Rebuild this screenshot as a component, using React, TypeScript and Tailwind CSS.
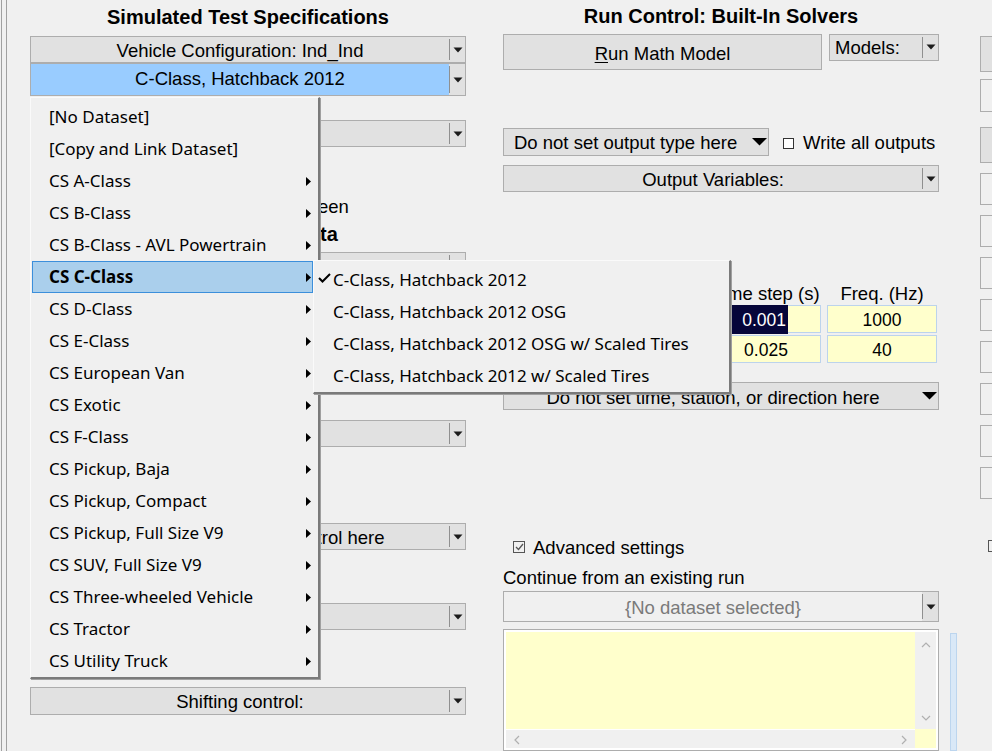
import React from 'react';

const menuItems = [
  '[No Dataset]',
  '[Copy and Link Dataset]',
  'CS A-Class',
  'CS B-Class',
  'CS B-Class - AVL Powertrain',
  'CS C-Class',
  'CS D-Class',
  'CS E-Class',
  'CS European Van',
  'CS Exotic',
  'CS F-Class',
  'CS Pickup, Baja',
  'CS Pickup, Compact',
  'CS Pickup, Full Size V9',
  'CS SUV, Full Size V9',
  'CS Three-wheeled Vehicle',
  'CS Tractor',
  'CS Utility Truck',
];

const subItems = [
  'C-Class, Hatchback 2012',
  'C-Class, Hatchback 2012 OSG',
  'C-Class, Hatchback 2012 OSG w/ Scaled Tires',
  'C-Class, Hatchback 2012 w/ Scaled Tires',
];

const SmallArrow = () => (
  <svg width="10" height="6" viewBox="0 0 10 6">
    <polygon points="0.5,0.5 9.5,0.5 5,5.5" fill="#1c1c1c" />
  </svg>
);

const BigArrow = () => (
  <svg width="15" height="8" viewBox="0 0 15 8">
    <polygon points="0,0 15,0 7.5,7.5" fill="#000" />
  </svg>
);

const SubArrow = () => (
  <svg width="5" height="9" viewBox="0 0 5 9">
    <polygon points="0,0 5,4.5 0,9" fill="#000" />
  </svg>
);

type ComboProps = {
  label?: React.ReactNode;
  className?: string;
  fill?: string;
  left?: boolean;
  muted?: boolean;
  textPad?: string;
};

// combo box with a small arrow cell on the right
function Combo({
  label,
  className = 'h-[27px]',
  fill = 'bg-[#e1e1e1]',
  left,
  muted,
  textPad = 'pt-[2px]',
}: ComboProps) {
  return (
    <div className={`flex border border-[#adadad] bg-[#e1e1e1] ${className}`}>
      <div
        className={`flex flex-1 items-center overflow-hidden whitespace-nowrap ${fill} ${textPad} ${
          left ? 'pl-[5px]' : 'justify-center'
        } ${muted ? 'text-[#7a7a7a]' : ''}`}
      >
        {label}
      </div>
      <div className="my-[2px] flex w-[16px] items-center justify-center border-l border-[#8f8f8f]">
        <SmallArrow />
      </div>
    </div>
  );
}

const Field = ({ children }: { children?: React.ReactNode }) => (
  <div className="flex h-[28px] w-[110px] items-center justify-center border border-[#bcd3ec] bg-[#ffffcc] pt-[2px] text-[17.5px]">
    {children}
  </div>
);

export default function App() {
  return (
    <div className="relative h-[751px] w-[992px] overflow-hidden bg-[#f0f0f0] font-['Liberation_Sans',Arial,sans-serif] text-[18.5px] text-black">
      <div className="flex h-full">
        {/* window edge */}
        <div className="ml-[1px] w-[6px] shrink-0 border-x border-[#a0a0a0]" />

        {/* Simulated test specifications */}
        <div className="ml-[23px] flex w-[436px] shrink-0 flex-col">
          <div className="flex h-[36px] items-center justify-center pb-[2px] text-[20px] font-bold">
            Simulated Test Specifications
          </div>
          <Combo label="Vehicle Configuration: Ind_Ind" />
          <Combo className="h-[33px]" fill="bg-[#99ccff]" textPad="pb-[1px]" label="C-Class, Hatchback 2012" />
          <Combo className="mt-[24px] h-[27px]" label="Powertrain" />
          <div className="mt-[47px] flex h-[24px] items-center justify-center pt-[2px]">Plot all results on screen</div>
          <div className="mt-[3px] flex h-[24px] items-center justify-center pr-[6px] pt-[2px] text-[20px] font-bold">
            Miscellaneous Data
          </div>
          <Combo className="mt-[7px] h-[27px]" label="Procedures" />
          <Combo className="mt-[141px] h-[27px]" label="Road" />
          <Combo className="mt-[76px] h-[27px]" label="Do not set the steering control here" />
          <Combo className="mt-[53px] h-[27px]" label="Braking control:" />
          <Combo className="mt-[57px] h-[28px]" label="Shifting control:" />
        </div>

        {/* Run control */}
        <div className="ml-[37px] flex w-[436px] shrink-0 flex-col">
          <div className="flex h-[36px] items-center justify-center pb-[2px] text-[20px] font-bold">
            Run Control: Built-In Solvers
          </div>
          <div className="flex items-start">
            <div className="flex h-[36px] w-[319px] items-center justify-center border border-[#adadad] bg-[#e1e1e1] pt-[4px]">
              <span className="underline underline-offset-2">R</span>un Math Model
            </div>
            <Combo className="ml-[7px] h-[27px] w-[110px]" left label="Models:" />
          </div>
          <div className="mt-[57px] flex items-center">
            <div className="flex h-[28px] w-[266px] items-center border border-[#adadad] bg-[#e1e1e1] pl-[10px]">
              <div className="flex-1 whitespace-nowrap pt-[2px]">Do not set output type here</div>
              <div className="pr-[1px]">
                <BigArrow />
              </div>
            </div>
            <div className="ml-[14px] mt-[3px] h-[11px] w-[11px] border border-[#333] bg-white" />
            <span className="ml-[9px] pt-[2px]">Write all outputs</span>
          </div>
          <Combo className="mt-[9px] h-[27px]" label="Output Variables:" />

          <div className="mt-[89px] grid grid-cols-[202px_110px_110px] gap-x-[6px] gap-y-[2px]">
            <div className="h-[22px]" />
            <div className="flex h-[22px] items-center justify-center whitespace-nowrap pt-[3px]">Time step (s)</div>
            <div className="flex h-[22px] items-center justify-center pt-[3px]">Freq. (Hz)</div>
            <div className="flex h-[28px] items-center">Math model</div>
            <div className="flex h-[28px] w-[110px] items-center justify-end border border-[#bcd3ec] bg-[#ffffcc] pr-[32px] text-[17.5px]">
              <span className="bg-[#06063a] pl-[28px] pr-[2px] pt-[2px] text-white">0.001</span>
            </div>
            <Field>1000</Field>
            <div className="flex h-[28px] items-center">Output</div>
            <Field>0.025</Field>
            <Field>40</Field>
          </div>

          <div className="mt-[19px] flex h-[28px] items-center border border-[#adadad] bg-[#e1e1e1]">
            <div className="flex-1 whitespace-nowrap pt-[2px] text-center">Do not set time, station, or direction here</div>
            <div className="pr-[1px]">
              <BigArrow />
            </div>
          </div>

          <div className="mt-[125px] flex h-[22px] items-center pl-[10px]">
            <div className="mt-[1px] flex h-[12px] w-[12px] items-center justify-center border border-[#555]">
              <svg width="9" height="8" viewBox="0 0 9 8">
                <path d="M1 4 L3.5 6.5 L8 1" stroke="#555" strokeWidth="1.3" fill="none" />
              </svg>
            </div>
            <span className="ml-[8px] pt-[2px]">Advanced settings</span>
          </div>
          <div className="mt-[8px] flex h-[22px] items-center pt-[2px]">Continue from an existing run</div>
          <Combo
            className="mt-[4px] h-[31px]"
            fill="bg-[#f0f0f0]"
            muted
            label="{No dataset selected}"
          />

          <div className="mt-[7px] h-[130px] border border-[#adadad] bg-white p-[2px]">
            <div className="grid h-full grid-cols-[1fr_21px] grid-rows-[97px_1fr] bg-[#ffffcc]">
              <div />
              <div className="flex flex-col items-center justify-between bg-[#f0f0f0] pb-[8px] pt-[10px]">
                <svg width="10" height="6" viewBox="0 0 10 6">
                  <polyline points="1,5 5,1 9,5" stroke="#b0b0b0" strokeWidth="1.2" fill="none" />
                </svg>
                <svg width="10" height="6" viewBox="0 0 10 6">
                  <polyline points="1,1 5,5 9,1" stroke="#b0b0b0" strokeWidth="1.2" fill="none" />
                </svg>
              </div>
              <div className="flex items-start justify-between border-t border-white bg-[#f0f0f0] px-[8px] pt-[5px]">
                <svg width="6" height="10" viewBox="0 0 6 10">
                  <polyline points="5,1 1,5 5,9" stroke="#b0b0b0" strokeWidth="1.2" fill="none" />
                </svg>
                <svg width="6" height="10" viewBox="0 0 6 10">
                  <polyline points="1,1 5,5 1,9" stroke="#b0b0b0" strokeWidth="1.2" fill="none" />
                </svg>
              </div>
              <div />
            </div>
          </div>
        </div>

        {/* splitter */}
        <div className="ml-[11px] mt-[633px] w-[7px] shrink-0 border border-[#bcd5ee] bg-[#d9e8f7]" />

        {/* buttons column, cut off at window edge */}
        <div className="ml-[23px] flex w-[40px] shrink-0 flex-col">
          <div className="mt-[36px] h-[36px] border border-[#adadad] bg-[#e1e1e1]" />
          <div className="mt-[7px] h-[33px] border border-[#adadad]" />
          <div className="mt-[15px] h-[36px] border border-[#adadad] bg-[#e1e1e1]" />
          {[0, 1, 2, 3, 4, 5, 6, 7].map((i) => (
            <div key={i} className="mt-[10px] h-[32px] border border-[#adadad]" />
          ))}
          <div className="ml-[8px] mt-[41px] h-[12px] w-[12px] border border-[#555]" />
        </div>
      </div>

      {/* dataset menu */}
      <div className="absolute left-[30px] top-[97px] w-[290px] border-l border-t border-b-2 border-r-2 border-l-[#fafafa] border-t-[#fafafa] border-b-[#7a7a7a] border-r-[#7a7a7a] bg-[#f0f0f0] pl-[1px] pr-[5px] pt-[3px] font-['Noto_Sans',sans-serif] text-[17px] shadow-[1px_1px_0_#a0a0a0]">
        {menuItems.map((item, i) => {
          const active = item === 'CS C-Class';
          return (
            <div
              key={item}
              className={`flex h-[32px] items-center justify-between border pl-[16px] pr-[1px] ${
                active ? 'border-[#3c8fdb] bg-[#aacfec] font-bold' : 'border-transparent'
              }`}
            >
              <span className="whitespace-nowrap">{item}</span>
              {i > 1 && <SubArrow />}
            </div>
          );
        })}
      </div>

      {/* C-Class submenu */}
      <div className="absolute left-[313px] top-[260px] w-[418px] border-l border-t border-b-2 border-r-2 border-l-[#fafafa] border-t-[#fafafa] border-b-[#7a7a7a] border-r-[#7a7a7a] bg-[#f0f0f0] pt-[3px] font-['Noto_Sans',sans-serif] text-[17px] shadow-[1px_1px_0_#a0a0a0]">
        {subItems.map((item, i) => (
          <div key={item} className="relative flex h-[32px] items-center pl-[19px]">
            {i === 0 && (
              <svg className="absolute left-[4px] top-[9px]" width="13" height="10" viewBox="0 0 13 10">
                <path d="M1 5 L4.5 8.5 L12 1" stroke="#000" strokeWidth="2" fill="none" />
              </svg>
            )}
            <span className="whitespace-nowrap">{item}</span>
          </div>
        ))}
      </div>
    </div>
  );
}
